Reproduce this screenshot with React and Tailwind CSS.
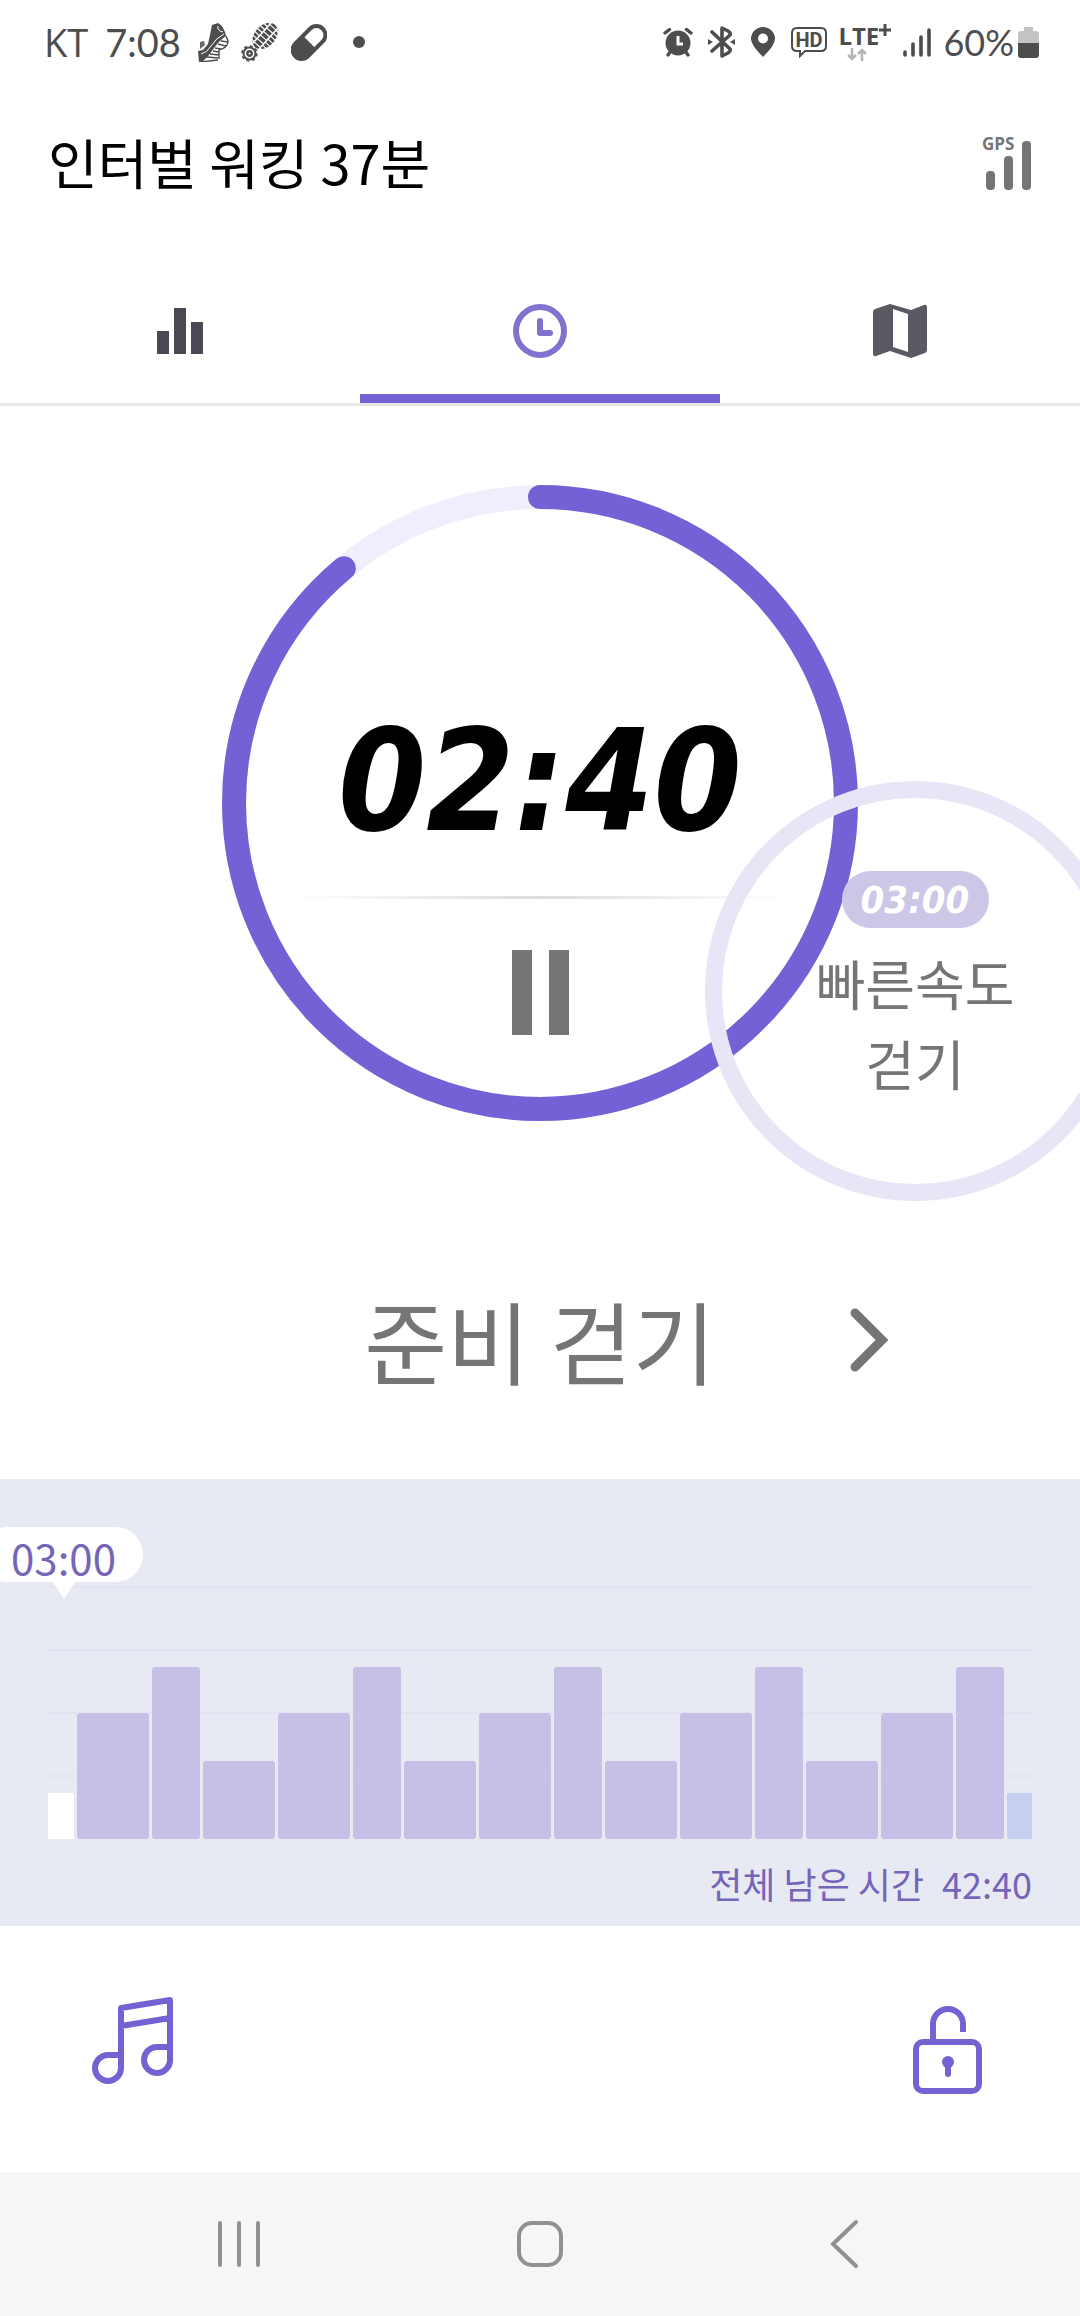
const BARS = [
  { w: 26, h: 46, c: "#ffffff", r: "0 2px 0 0" },
  ...[0, 1, 2, 3].flatMap(() => [
    { w: 72, h: 126 },
    { w: 48, h: 172 },
    { w: 72, h: 78 },
  ]),
  { w: 72, h: 126 },
  { w: 48, h: 172 },
  { w: 25, h: 46, c: "#c6cfed", r: "2px 0 0 2px" },
];

const KR = "font-['Noto_Sans_CJK_KR',sans-serif]";
const CLOCK = "font-['DejaVu_Sans_Condensed','Inter',sans-serif] font-bold italic";

function ShoeIcon() {
  return (
    <svg width="31" height="39" viewBox="0 0 31 39" aria-hidden="true">
      <path d="M14 2 L20 0 L24 3 L27 9 L28 13 L20 20 L13 30 L7 38 L1 39 L0 28 L5 27 L10 21 L12 12 Z" fill="#4d4d4d" />
      <path d="M2 26 V19 L6 18 L7 22 Z" fill="#6b6b6b" />
      <path d="M3 31 Q9 30 13 23 Q18 15 26 11" stroke="#fff" strokeWidth="1" fill="none" />
      <path d="M20 3 Q19 8 25 9" stroke="#fff" strokeWidth="1" fill="none" />
      <path d="M28 13 L30 18 Q30 25 21 27 L21 38 L5 38 Q10 34 14 28 Q20 19 28 13 Z" fill="#fff" />
      <path d="M28 13 L30 18 Q30 25 21 27 L21 36 M20 37 L2 39" stroke="#4d4d4d" strokeWidth="1.4" fill="none" />
      <path d="M23 18 L30 19 M20 21 L28 23 M17 25 L23 26 M15 28 L21 29 M12 31 L21 32 M9 34 L20 35" stroke="#4d4d4d" strokeWidth="1.5" />
    </svg>
  );
}

function SoleIcon() {
  return (
    <svg width="38" height="39" viewBox="0 0 38 39" aria-hidden="true">
      <clipPath id="sole">
        <ellipse cx="24" cy="13" rx="10.500" ry="15" />
      </clipPath>
      <g transform="rotate(42 24 13)">
        <g clipPath="url(#sole)" fill="none" stroke="#4d4d4d">
          <path d="M16 -3 V30 M32 -2 V30" strokeWidth="6" strokeDasharray="2.8 1.2" />
          <path d="M24 -3 V30" strokeWidth="7" strokeDasharray="3.6 1.1" />
        </g>
      </g>
      <circle cx="8.500" cy="30.500" r="6" fill="none" stroke="#4d4d4d" strokeWidth="2" />
      <circle cx="8.500" cy="30.500" r="7.500" fill="none" stroke="#4d4d4d" strokeWidth="1.600" strokeDasharray="3 2.900" />
      <circle cx="8.500" cy="30.500" r="2.200" fill="none" stroke="#4d4d4d" strokeWidth="2.400" />
    </svg>
  );
}

function PillIcon() {
  return (
    <svg width="36" height="37" viewBox="0 0 36 37" aria-hidden="true">
      <g transform="rotate(45 18 18.500)">
        <rect x="9" y="-1" width="18" height="39" rx="9" fill="none" stroke="#4d4d4d" strokeWidth="4" />
        <path d="M8 18 H28 V29 A10 10 0 0 1 8 29 Z" fill="#4d4d4d" />
      </g>
    </svg>
  );
}

function StatusBar() {
  return (
    <header className="flex h-[84px] items-center justify-between pl-[44px] pr-[41px] text-[#4d4d4d]">
      <div className="flex items-center">
        <span className="font-['Open_Sans',sans-serif] text-[38px] leading-none">KT</span>
        <span className="ml-[17px] font-['Lato',sans-serif] text-[38px] leading-none">7:08</span>
        <div className="ml-[17px] flex items-center gap-[12px]">
          <ShoeIcon />
          <SoleIcon />
          <PillIcon />
        </div>
        <span className="ml-[26px] size-3 rounded-full bg-[#4d4d4d]" />
      </div>
      <div className="flex items-center">
        <svg width="30" height="30" viewBox="0 0 30 30" aria-hidden="true">
          <circle cx="15" cy="16" r="12.500" fill="#4d4d4d" />
          <path d="M2 6 L6.500 2.500 M28 6 L23.500 2.500 M5 28 L8 24 M25 28 L22 24" stroke="#4d4d4d" strokeWidth="3.400" strokeLinecap="round" />
          <path d="M15 9 V17 H20" stroke="#fff" strokeWidth="3" fill="none" />
        </svg>
        <svg className="ml-[15px]" width="27" height="32" viewBox="0 0 27 32" aria-hidden="true">
          <path d="M4 6 L22 23 Q23 25 20 27 L14 30 V2 L20 5 Q23 7 22 9 L4 25" stroke="#4d4d4d" strokeWidth="3.600" fill="none" strokeLinecap="round" strokeLinejoin="round" />
          <path d="M0 13 L5 16 L0 19 Z M27 13 L22 16 L27 19 Z" fill="#4d4d4d" />
        </svg>
        <svg className="ml-4" width="24" height="30" viewBox="0 0 24 30" aria-hidden="true">
          <path fillRule="evenodd" d="M12 0 A12 12 0 0 1 24 12 Q24 18 12 30 Q0 18 0 12 A12 12 0 0 1 12 0 Z M12 6.500 A5 5 0 1 0 12 16.500 A5 5 0 1 0 12 6.500 Z" fill="#4d4d4d" />
        </svg>
        <svg className="ml-4" width="36" height="31" viewBox="0 0 36 31" aria-hidden="true">
          <path d="M6 1 H30 Q35 1 35 6 V19 Q35 24 30 24 H14 L9 29 V24 H6 Q1 24 1 19 V6 Q1 1 6 1 Z" fill="none" stroke="#4d4d4d" strokeWidth="2" />
          <text x="18" y="20" textAnchor="middle" className="font-['Roboto',sans-serif] text-[20px] font-bold" fill="#4d4d4d">HD</text>
        </svg>
        <div className="ml-[11px] flex w-[54px] flex-col">
          <span className="flex items-start font-['Open_Sans',sans-serif] text-[24px] font-bold leading-[24px]">
            LTE
            <svg width="12" height="14" viewBox="0 0 12 14" aria-hidden="true">
              <path d="M6 0 V12 M0 6 H12" stroke="#4d4d4d" strokeWidth="3" />
            </svg>
          </span>
          <svg className="ml-2" width="22" height="13" viewBox="0 0 22 13" aria-hidden="true">
            <path d="M6 0 V11 M2 7 L6 11 L10 7 M16 13 V2 M12 6 L16 2 L20 6" stroke="#b5b5b5" strokeWidth="2.600" fill="none" />
          </svg>
        </div>
        <svg className="ml-[11px]" width="28" height="29" viewBox="0 0 28 29" aria-hidden="true">
          <path d="M2 24 V27 M10 16 V27 M18 9 V27 M26 2 V27" stroke="#4d4d4d" strokeWidth="3.600" strokeLinecap="round" />
        </svg>
        <span className="ml-3 font-['Lato',sans-serif] text-[36px] leading-none">60%</span>
        <svg className="ml-1" width="21" height="32" viewBox="0 0 21 32" aria-hidden="true">
          <path d="M6 1 H15 V5 H18 Q21 5 21 8 V17 H0 V8 Q0 5 3 5 H6 Z" fill="#c3c3c3" />
          <path d="M0 17 H21 V29 Q21 32 18 32 H3 Q0 32 0 29 Z" fill="#4d4d4d" />
        </svg>
      </div>
    </header>
  );
}

function TitleBar() {
  return (
    <div className="flex h-[160px] items-center justify-between pb-[4px] pl-[48px] pr-[47px]">
      <h1 className={`${KR} text-[54px] leading-[80px] text-black`}>인터벌 워킹 37분</h1>
      <svg width="52" height="72" viewBox="0 -8 52 72" role="img" aria-label="GPS">
        <text x="1" y="16" className="font-['Open_Sans',sans-serif] text-[17px] font-bold" fill="#757575">GPS</text>
        <rect x="5" y="37" width="9" height="19" rx="4" fill="#757575" />
        <rect x="23" y="22" width="9" height="34" rx="4" fill="#757575" />
        <rect x="41" y="7" width="9" height="49" rx="4" fill="#757575" />
      </svg>
    </div>
  );
}

function Tabs() {
  const base = "flex justify-center pt-[60px] pb-[36px] border-b-[9px]";
  return (
    <div role="tablist" className="grid grid-cols-3 border-b-[3px] border-[#e8e8e8]">
      <button role="tab" aria-selected="false" aria-label="통계" className={`${base} border-transparent`}>
        <svg width="54" height="54" viewBox="0 0 54 54" aria-hidden="true">
          <path d="M4 27 H16 V50 H4 Z M21 4 H33 V50 H21 Z M38 18 H50 V50 H38 Z" fill="#4a4853" />
        </svg>
      </button>
      <button role="tab" aria-selected="true" aria-label="타이머" className={`${base} border-[#7661d3]`}>
        <svg width="54" height="54" viewBox="0 0 54 54" aria-hidden="true">
          <circle cx="27" cy="27" r="24" fill="none" stroke="#8172cf" strokeWidth="6" />
          <path d="M27 17 V29 H37" stroke="#8172cf" strokeWidth="6" fill="none" strokeLinecap="round" strokeLinejoin="round" />
        </svg>
      </button>
      <button role="tab" aria-selected="false" aria-label="지도" className={`${base} border-transparent`}>
        <svg width="54" height="54" viewBox="0 0 54 54" aria-hidden="true">
          <path fillRule="evenodd" d="M0 8 Q0 6 2 5 L17 0 L38 6 L51 1 Q54 0 54 4 V46 Q54 48 52 49 L38 54 L17 47 L3 52 Q0 53 0 49 Z M20 5 V43 L35 48 V10 Z" fill="#5b5862" />
        </svg>
      </button>
    </div>
  );
}

function NextStep() {
  return (
    <div className="absolute left-[483px] top-[296px] flex size-[420px] flex-col items-center rounded-full border-[17px] border-[#e8e5f6] pt-[73px]">
      <span className={`${CLOCK} flex h-[57px] w-[147px] items-center justify-center rounded-full bg-[#cdc6e6] text-[38px] leading-none text-white`}>
        03:00
      </span>
      <p className={`${KR} mt-[15px] text-center text-[54px] leading-[80px] text-[#757575]`}>
        빠른속도
        <br />
        걷기
      </p>
    </div>
  );
}

function Timer() {
  const c = 2 * Math.PI * 306;
  return (
    <section className="flex flex-col items-center overflow-hidden pt-[79px] pb-[74px]">
      <div className="relative size-[636px]">
        <svg className="absolute inset-0" width="636" height="636" viewBox="0 0 636 636" aria-hidden="true">
          <circle cx="318" cy="318" r="306" fill="none" stroke="#f0edfd" strokeWidth="24" />
          <circle
            cx="318"
            cy="318"
            r="306"
            fill="none"
            stroke="#7461d6"
            strokeWidth="24"
            strokeLinecap="round"
            strokeDasharray={`${(c * 160) / 180} ${c}`}
            transform="rotate(-90 318 318)"
          />
        </svg>
        <div className="relative flex flex-col items-center pt-[216px]">
          <time className={`${CLOCK} text-[141px] leading-[160px] text-black`}>02:40</time>
          <div className="mt-[35px] h-[3px] w-[500px] bg-linear-to-r from-transparent via-[#dcdcdc] to-transparent" />
          <button aria-label="일시정지" className="mt-[51px] flex gap-[17px]">
            <span className="h-[85px] w-[20px] bg-[#757575]" />
            <span className="h-[85px] w-[20px] bg-[#757575]" />
          </button>
        </div>
        <NextStep />
      </div>
      <div className="mt-[153px] grid w-full grid-cols-[1fr_auto_1fr] items-center">
        <h2 className={`${KR} col-start-2 text-[90px] leading-[131px] text-[#757575]`}>준비 걷기</h2>
        <button aria-label="다음" className="ml-[133px] justify-self-start">
          <svg width="40" height="66" viewBox="0 0 40 66" aria-hidden="true">
            <path d="M6 6 L33 33 L6 60" stroke="#757575" strokeWidth="9" fill="none" strokeLinecap="round" />
          </svg>
        </button>
      </div>
    </section>
  );
}

function Plan() {
  return (
    <section className="relative bg-[#e7eaf2] pt-[107px] pb-[17px]">
      <div className="relative mx-12">
        <div className="flex flex-col gap-[61px] pb-[62px]">
          {[0, 1, 2, 3].map((i) => (
            <div key={i} className="h-[2px] bg-[#e5e3f3]" />
          ))}
        </div>
        <div className="absolute inset-x-0 bottom-0 flex items-end gap-[3px]">
          {BARS.map((b, i) => (
            <div
              key={i}
              className="basis-0 rounded-[3px] bg-[#c6c0e7]"
              style={{ flexGrow: b.w, height: b.h, backgroundColor: b.c, borderRadius: b.r }}
            />
          ))}
        </div>
      </div>
      <div className="absolute left-[-20px] top-12 flex h-[55px] w-[163px] items-center justify-center rounded-full bg-white pl-1 pt-1">
        <span className={`${KR} text-[42px] leading-none text-[#7565b9]`}>03:00</span>
        <svg className="absolute left-[72px] top-[54px]" width="24" height="18" viewBox="0 0 24 18" aria-hidden="true">
          <path d="M0 0 H24 L12 18 Z" fill="#fff" />
        </svg>
      </div>
      <p className={`${KR} mt-[18px] flex justify-end gap-[18px] pr-12 text-[36px] leading-[52px] text-[#7565b9]`}>
        <span>전체 남은 시간</span>
        <span>42:40</span>
      </p>
    </section>
  );
}

function Actions() {
  return (
    <div className="flex grow items-center justify-between px-[92px]">
      <button aria-label="음악" className="pb-[18px]">
        <svg width="82" height="90" viewBox="0 0 82 90" fill="none" stroke="#7661d3" strokeWidth="6" strokeLinejoin="round" aria-hidden="true">
          <path d="M29 60 H16 A13 13 0 1 0 29 73 V13 L78 5 V64 A13 13 0 1 1 65 52 H78 M29 31 L78 23" />
        </svg>
      </button>
      <button aria-label="잠금">
        <svg width="80" height="90" viewBox="0 0 80 90" fill="none" stroke="#7661d3" strokeWidth="6" aria-hidden="true">
          <rect x="8" y="38" width="63" height="49" rx="7" />
          <path d="M25 38 V20 A15 15 0 0 1 55 20 V28" />
          <circle cx="40" cy="58" r="6" fill="#7661d3" stroke="none" />
          <path d="M40 60 V70" strokeLinecap="round" />
        </svg>
      </button>
    </div>
  );
}

function SystemNav() {
  return (
    <nav className="grid h-36 grid-cols-[1fr_auto_1fr] items-center bg-[#f6f6f6] px-[214px]">
      <button aria-label="최근 앱" className="justify-self-start">
        <svg width="50" height="50" viewBox="0 0 50 50" aria-hidden="true">
          <path d="M6 4 V46 M25 4 V46 M44 4 V46" stroke="#909090" strokeWidth="4" strokeLinecap="round" />
        </svg>
      </button>
      <button aria-label="홈">
        <svg width="50" height="50" viewBox="0 0 50 50" aria-hidden="true">
          <rect x="4" y="4" width="42" height="42" rx="13" fill="none" stroke="#909090" strokeWidth="4" />
        </svg>
      </button>
      <button aria-label="뒤로" className="justify-self-end">
        <svg width="50" height="50" viewBox="0 0 50 50" aria-hidden="true">
          <path d="M40 3 L17 25 L40 47" fill="none" stroke="#909090" strokeWidth="4" strokeLinecap="round" />
        </svg>
      </button>
    </nav>
  );
}

export default function App() {
  return (
    <main className="flex min-h-screen flex-col bg-white">
      <StatusBar />
      <TitleBar />
      <Tabs />
      <Timer />
      <Plan />
      <Actions />
      <SystemNav />
    </main>
  );
}
